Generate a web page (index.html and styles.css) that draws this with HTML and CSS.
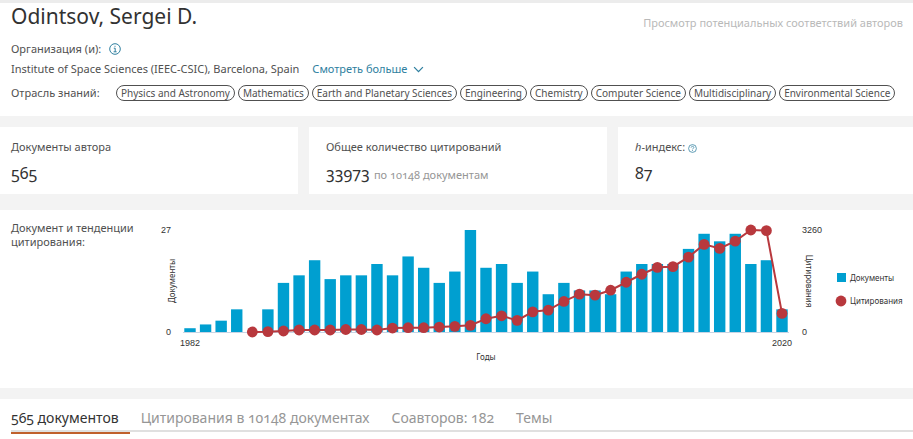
FILE: index.html
```html
<!doctype html>
<html lang="ru">
<head>
	<meta charset="UTF-8">
	<title>Odintsov, Sergei D.</title>
	<link rel="stylesheet" href="styles.css">
</head>
<body>
<header class="author">
	<div class="author-top">
		<h1 class="author-name">Odintsov, Sergei D.</h1>
		<span class="author-match">Просмотр потенциальных соответствий авторов</span>
	</div>
	<div class="row">
		Организация (и):
		<button class="icon-btn" aria-label="Информация">
			<svg class="icon" viewBox="0 0 12 12"><circle cx="6" cy="6" r="5.3"/><path d="M4.8 5.2H6.2V8.8M4.6 8.8H7.6M6 2.8V3.8"/></svg>
		</button>
	</div>
	<div class="row">
		Institute of Space Sciences (IEEC-CSIC), Barcelona, Spain
		<a class="more" href="#">Смотреть больше
			<svg class="chevron" viewBox="0 0 12 8"><path d="M1.2 1.2L6 6.2L10.8 1.2"/></svg>
		</a>
	</div>
	<div class="row areas">
		<span class="areas-label">Отрасль знаний:</span>
		<ul class="tags">
			<li class="tag">Physics and Astronomy</li>
			<li class="tag">Mathematics</li>
			<li class="tag">Earth and Planetary Sciences</li>
			<li class="tag">Engineering</li>
			<li class="tag">Chemistry</li>
			<li class="tag">Computer Science</li>
			<li class="tag">Multidisciplinary</li>
			<li class="tag">Environmental Science</li>
		</ul>
	</div>
</header>

<section class="cards">
	<div class="card">
		<div class="card-title">Документы автора</div>
		<div class="card-value">565</div>
	</div>
	<div class="card">
		<div class="card-title">Общее количество цитирований</div>
		<div class="card-value">33973 <span class="card-note">по 10148 документам</span></div>
	</div>
	<div class="card">
		<div class="card-title"><i>h</i>-индекс:<button class="icon-btn" aria-label="Справка">
				<svg class="icon icon-small" viewBox="0 0 12 12"><circle cx="6" cy="6" r="5.2"/><path d="M4.2 4.8C4.2 2.6 7.8 2.6 7.8 4.7C7.8 5.9 6 5.9 6 7.2M6 8.2V9.4"/></svg>
			</button>
		</div>
		<div class="card-value">87</div>
	</div>
</section>

<section class="trends">
	<h2 class="trends-title">Документ и тенденции цитирования:</h2>
	<svg class="chart" id="chart" viewBox="0 0 762 160">
		<line class="axis" x1="32" y1="113.5" x2="638" y2="113.5"/>
		<g id="bars"></g>
		<polyline class="cite-line" id="line"/>
		<g id="dots"></g>
		<text x="20" y="14" text-anchor="end">27</text>
		<text x="20" y="116" text-anchor="end">0</text>
		<text x="39" y="127" text-anchor="middle">1982</text>
		<text x="631" y="127" text-anchor="middle">2020</text>
		<text class="label" x="335" y="141" text-anchor="middle">Годы</text>
		<text x="651" y="14">3260</text>
		<text x="651" y="116">0</text>
		<text class="label" transform="translate(24 62) rotate(-90)" text-anchor="middle">Документы</text>
		<text class="label" transform="translate(655 62) rotate(90)" text-anchor="middle">Цитирования</text>
		<rect class="bar" x="686" y="54" width="9" height="9"/>
		<text class="label" x="699" y="62">Документы</text>
		<circle class="dot" cx="690" cy="82" r="5.4"/>
		<text class="label" x="699" y="85">Цитирования</text>
	</svg>
</section>

<nav class="tabs">
	<a class="tab tab-active" href="#">565 документов</a>
	<a class="tab" href="#">Цитирования в 10148 документах</a>
	<a class="tab" href="#">Соавторов: 182</a>
	<a class="tab" href="#">Темы</a>
</nav>
<script src="chart.js"></script>
</body>
</html>
```
FILE: styles.css
```css
*{
	box-sizing:border-box;
}
body{
	min-height:100vh;
	margin:0;
	background-color:#fff;
	color:#505050;
	font-family:"Noto Sans", sans-serif;
	font-size:11px;
	line-height:20px;
	font-variant-numeric:oldstyle-nums;
}
a{
	text-decoration:none;
}

/*author*/
.author{
	border-top:3px solid #ececec;
	padding:0 10px 15px 11px;
}
.author-top{
	display:flex;
	justify-content:space-between;
	height:36px;
}
.author-name{
	margin:0;
	font-size:21px;
	font-weight:normal;
	line-height:26px;
	color:#323232;
}
.author-match{
	padding-top:10px;
	color:#b9b9b9;
}
.row{
	display:flex;
	align-items:center;
	min-height:20px;
}
.icon-btn{
	display:inline-flex;
	margin:0 0 0 8px;
	padding:0;
	border:0;
	background:none;
	vertical-align:middle;
	cursor:pointer;
}
.card .icon-btn{
	margin-left:3px;
}
.icon, .chevron{
	width:12px;
	fill:none;
	stroke:#2f7f9f;
}
.icon-small{
	width:9px;
}
.chevron{
	width:11px;
	margin-left:3px;
	stroke-width:1.4;
}
.more{
	margin-left:13px;
	color:#2f7f9f;
}
.areas{
	padding-top:6px;
}
.areas-label{
	flex:none;
	width:105px;
	line-height:16px;
}
.tags{
	display:flex;
	flex-wrap:wrap;
	gap:3px;
	margin:0;
	padding:0;
	list-style:none;
}
.tag{
	padding:0 4px;
	border:1px solid #505050;
	border-radius:8px;
	font-size:10px;
	line-height:14px;
}

/*cards*/
.cards{
	display:grid;
	grid-template-columns:298fr 298fr 295fr;
	gap:11px;
	padding:11px 0 16px;
	background-color:#f3f3f3;
}
.card{
	padding:10px 17px 9px;
	background-color:#fff;
}
.card:first-child{
	padding-left:11px;
}
.card-value{
	padding-top:4px;
	font-size:16px;
	line-height:24px;
	color:#323232;
}
.card-note{
	font-size:11px;
	line-height:1;
	color:#969696;
}

/*trends*/
.trends{
	display:flex;
	padding:9px 0 9px 11px;
	border-bottom:11px solid #f3f3f3;
}
.trends-title{
	width:140px;
	margin:0;
	padding-top:2px;
	font-size:11px;
	font-weight:normal;
	line-height:14px;
}
.chart{
	flex:1;
	min-width:0;
	font-family:"Liberation Sans", Arial, sans-serif;
	font-size:9px;
	font-variant-numeric:normal;
	fill:#323232;
}
.label{
	font-family:"Noto Sans", sans-serif;
	font-size:8px;
}
.axis{
	stroke:#c8d4e4;
}
.bar{
	fill:#009fd0;
}
.dot{
	fill:#b8383d;
}
.cite-line{
	fill:none;
	stroke:#b8383d;
	stroke-width:2;
}

/*tabs*/
.tabs{
	display:flex;
	align-items:flex-start;
	gap:11px;
	height:33px;
	margin-left:11px;
	padding-top:6px;
	border-bottom:2px solid #e0e0e0;
	font-size:14px;
	line-height:25px;
}
.tab{
	padding-right:11px;
	color:#969696;
}
.tab-active{
	padding-bottom:2px;
	border-bottom:2px solid #c0602c;
	color:#323232;
}
```
FILE: chart.js
```js
var docs = [1,2,3,6,0,6,13,15,19,14,15,15,18,15,20,17,13,16,27,17,18,13,16,10,13,11,11,10,16,18,18,18,22,26,24,26,18,19,6],
	cites = [0,10,32,64,64,64,80,80,64,127,137,137,159,181,213,423,518,372,645,700,976,1209,1177,1336,1590,1845,2067,2089,2395,2800,2672,2904,3260,3240,595],
	svgNS = "http://www.w3.org/2000/svg",
	left = 39,
	step = 592 / 38,
	base = 113,
	height = 102

function add(parent, tag, attrs){
	var el = document.createElementNS(svgNS, tag)
	for(var k in attrs){
		el.setAttribute(k, attrs[k])
	}
	document.getElementById(parent).appendChild(el)
}

docs.forEach(function(n, i){
	var h = n / 27 * height
	add("bars", "rect", {"class":"bar", x:left + i * step - 5.7, y:base - h, width:11.4, height:h})
})

// citations start in 1986
var points = cites.map(function(n, i){
	var x = left + (i + 4) * step,
		y = base - n / 3260 * height
	add("dots", "circle", {"class":"dot", cx:x, cy:y, r:5.4})
	return x + "," + y
})
document.getElementById("line").setAttribute("points", points.join(" "))
```
